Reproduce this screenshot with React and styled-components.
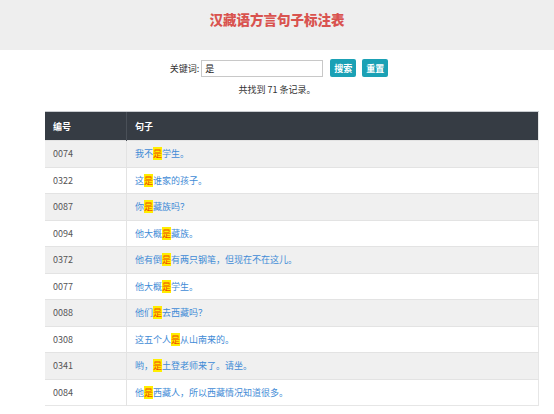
import React, { useState } from 'react';
import styled, { createGlobalStyle } from 'styled-components';

const GlobalStyle = createGlobalStyle`
    body {
        margin: 0;
        background: #fff;
        font-family: "Noto Sans CJK SC", "Liberation Sans", sans-serif;
        color: #333;
    }
`;

const Header = styled.div`
    height: 50px;
    box-sizing: border-box;
    padding-top: 9px;
    background: #eeeeee;
    text-align: center;
`;

const Title = styled.h1`
    margin: 0;
    font-size: 13.5px;
    font-weight: 900;
    line-height: 20px;
    color: #d9534f;
`;

const SearchForm = styled.form`
    display: flex;
    justify-content: center;
    align-items: center;
    margin-top: 9px;
    padding-left: 4px;
`;

const Label = styled.label`
    font-size: 9px;
    color: #333;
    margin-right: 2px;
`;

const Input = styled.input`
    width: 122px;
    height: 17px;
    box-sizing: border-box;
    border: 1px solid #c8c8c8;
    padding: 0 3px;
    font-size: 9px;
    font-family: inherit;
    color: #222;
    outline: none;
`;

const Button = styled.button`
    margin-left: ${props => props.first ? '7px' : '6px'};
    width: 26px;
    height: 18px;
    padding: 0;
    border: none;
    border-radius: 2px;
    background: #1ba1b5;
    color: #fff;
    font-size: 9px;
    font-weight: bold;
    font-family: inherit;
    cursor: pointer;
`;

const Count = styled.p`
    margin: 6px 0 0;
    text-align: center;
    font-size: 9px;
    line-height: 14px;
    color: #333;
`;

const Table = styled.table`
    margin: 14px 0 0 45px;
    width: 494px;
    border-collapse: collapse;
    font-size: 9px;
    border-right: 1px solid #e6e6e6;
    border-bottom: 1px solid #e6e6e6;
`;

const Th = styled.th`
    height: 28px;
    padding: 0 0 0 8px;
    background: #363c44;
    color: #fff;
    font-weight: bold;
    text-align: left;
    border-top: 1px solid #c9ccd0;
    border-left: ${props => props.divider ? '1px solid #4a5058' : 'none'};
    width: ${props => props.narrow ? '73px' : 'auto'};
`;

const Tr = styled.tr`
    height: 26.5px;
    background: ${props => props.striped ? '#f0f0f0' : '#fff'};
`;

const Td = styled.td`
    padding: 0 0 0 8px;
    border-top: 1px solid #e3e3e3;
    border-left: ${props => props.divider ? '1px solid #e3e3e3' : 'none'};
    color: ${props => props.link ? '#3f8bd6' : '#555'};
`;

const Mark = styled.span`
    background: #ffee00;
    color: #f04a00;
`;

const rows = [
    ['0074', '我不', '学生。'],
    ['0322', '这', '谁家的孩子。'],
    ['0087', '你', '藏族吗？'],
    ['0094', '他大概', '藏族。'],
    ['0372', '他有倒', '有两只钢笔，但现在不在这儿。'],
    ['0077', '他大概', '学生。'],
    ['0088', '他们', '去西藏吗？'],
    ['0308', '这五个人', '从山南来的。'],
    ['0341', '哟，', '土登老师来了。请坐。'],
    ['0084', '他', '西藏人，所以西藏情况知道很多。'],
];

const App = () => {
    const [keyword, setKeyword] = useState('是');

    return (
        <>
            <GlobalStyle />
            <Header>
                <Title>汉藏语方言句子标注表</Title>
            </Header>
            <SearchForm onSubmit={e => e.preventDefault()}>
                <Label htmlFor="kw">关键词:</Label>
                <Input id="kw" type="text" value={keyword} onChange={e => setKeyword(e.target.value)} />
                <Button first type="submit">搜索</Button>
                <Button type="button" onClick={() => setKeyword('')}>重置</Button>
            </SearchForm>
            <Count>共找到 71 条记录。</Count>
            <Table>
                <thead>
                    <tr>
                        <Th narrow>编号</Th>
                        <Th divider>句子</Th>
                    </tr>
                </thead>
                <tbody>
                    {rows.map((r, i) => (
                        <Tr key={r[0]} striped={i % 2 === 0}>
                            <Td>{r[0]}</Td>
                            <Td divider link>{r[1]}<Mark>是</Mark>{r[2]}</Td>
                        </Tr>
                    ))}
                </tbody>
            </Table>
        </>
    );
};

export default App;
